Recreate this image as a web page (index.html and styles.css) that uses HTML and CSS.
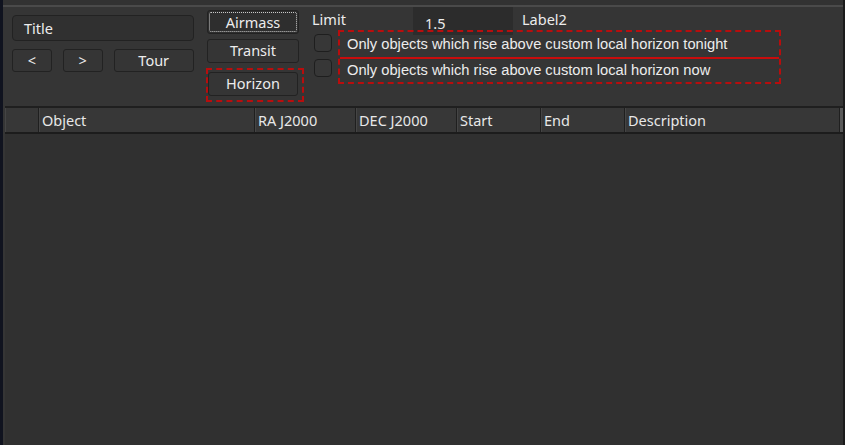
FILE: index.html
```html
<!DOCTYPE html>
<html>
<head>
<meta charset="utf-8">
<link rel="stylesheet" href="styles.css">
</head>
<body>
<div class="window">
  <div class="topline"></div>
  <div class="panel">
    <div class="col1">
      <div class="title-field">Title</div>
      <div class="nav-row">
        <div class="btn btn-sm">&lt;</div>
        <div class="btn btn-sm">&gt;</div>
        <div class="btn btn-tour">Tour</div>
      </div>
    </div>
    <div class="col2">
      <div class="btn btn-wide focus"><span class="focus-ring">Airmass</span></div>
      <div class="btn btn-wide transit">Transit</div>
      <div class="dash-box horizon-box">
        <div class="btn btn-wide horizon">Horizon</div>
      </div>
    </div>
    <div class="col3">
      <div class="limit-row">
        <span class="lbl limit">Limit</span>
        <span class="limit-field">1.5</span>
        <span class="lbl">Label2</span>
      </div>
      <div class="checks">
        <div class="boxes">
          <span class="cb"></span>
          <span class="cb"></span>
        </div>
        <div class="dash-box opts">
          <div class="opt">Only objects which rise above custom local horizon tonight</div>
          <div class="opt opt2">Only objects which rise above custom local horizon now</div>
        </div>
      </div>
    </div>
  </div>
  <div class="table">
    <div class="thead">
      <div class="th c0"></div>
      <div class="th c1">Object</div>
      <div class="th c2">RA J2000</div>
      <div class="th c3">DEC J2000</div>
      <div class="th c4">Start</div>
      <div class="th c5">End</div>
      <div class="th c6">Description</div>
      <div class="th c7"></div>
    </div>
    <div class="tbody"></div>
  </div>
</div>
</body>
</html>
```
FILE: styles.css
```css
html, body {
  margin: 0;
  padding: 0;
  width: 845px;
  height: 445px;
  overflow: hidden;
  background: #333333;
  font-family: "Noto Sans", "Open Sans", sans-serif;
  color: #ececec;
}
.window {
  width: 845px;
  height: 445px;
  box-sizing: border-box;
  border-left: 3px solid #10131f;
  border-right: 2px solid #1b1b1b;
  display: flex;
  flex-direction: column;
  background: #353535;
}
.topline {
  height: 5px;
  border-bottom: 2px solid #4a4a4a;
  background: #323232;
  flex: none;
}
.panel {
  height: 99px;
  display: flex;
  padding-left: 9px;
  box-sizing: border-box;
  flex: none;
}
.col1 {
  width: 182px;
  padding-top: 8px;
}
.title-field {
  height: 26px;
  box-sizing: border-box;
  border: 1px solid #222;
  border-radius: 4px;
  background: #303030;
  font-size: 14.5px;
  line-height: 25px;
  padding-left: 11px;
}
.nav-row {
  display: flex;
  margin-top: 8px;
  gap: 11px;
}
.btn {
  box-sizing: border-box;
  border: 1px solid #222;
  border-radius: 3px;
  background: #353535;
  font-size: 14.5px;
  text-align: center;
  height: 23px;
  line-height: 21px;
}
.btn-sm { width: 40px; }
.btn-tour { width: 81px; }
.col2 {
  width: 98px;
  margin-left: 12px;
  padding-top: 3px;
}
.btn-wide {
  width: 92px;
  height: 24px;
  margin-left: 1px;
}
.focus {
  padding: 1px;
  background: #2e2e2e;
}
.focus-ring {
  display: block;
  border: 1px dotted #c8c8c8;
  border-radius: 2px;
  height: 20px;
  line-height: 19px;
  box-sizing: border-box;
}
.transit {
  margin-top: 5px;
}
.dash-box {
  border: 2px dashed #b80d0d;
  box-sizing: border-box;
}
.horizon-box {
  margin-top: 5px;
  width: 98px;
  height: 34px;
  padding-top: 2px;
}
.horizon {
  width: 90px;
  margin-left: 0;
}
.col3 {
  margin-left: 8px;
  padding-top: 1px;
}
.limit-row {
  display: flex;
  align-items: flex-start;
  font-size: 14.5px;
  height: 22px;
}
.lbl {
  line-height: 22px;
}
.limit {
  width: 101px;
}
.limit-field {
  width: 100px;
  height: 28px;
  margin-top: -1px;
  background: #2c2c2c;
  box-sizing: border-box;
  padding-left: 12px;
  line-height: 32px;
  margin-right: 9px;
  position: relative;
  z-index: 0;
}
.checks {
  display: flex;
}
.boxes {
  display: flex;
  flex-direction: column;
  padding-left: 2px;
  padding-top: 4px;
  gap: 7px;
  width: 24px;
}
.cb {
  width: 18px;
  height: 18px;
  box-sizing: border-box;
  border: 1px solid #1e1e1e;
  border-radius: 4px;
  background: #373737;
}
.opts {
  width: 443px;
  height: 54px;
  font-family: "Liberation Sans", Arial, sans-serif;
  font-size: 14.7px;
  position: relative;
  z-index: 1;
}
.opt {
  height: 25px;
  line-height: 24px;
  padding-left: 7px;
}
.opt2 {
  border-top: 2px solid #c80c0c;
  height: 25px;
  line-height: 23px;
}
.table {
  flex: 1;
  display: flex;
  flex-direction: column;
  margin-left: 2px;
  background: #303030;
}
.thead {
  display: flex;
  height: 28px;
  box-sizing: border-box;
  border-top: 2px solid #1f1f1f;
  border-bottom: 2px solid #1c1c1c;
  flex: none;
}
.th {
  box-sizing: border-box;
  background: #373737;
  border-right: 1px solid #1f1f1f;
  border-left: 1px solid #454545;
  font-size: 14.5px;
  line-height: 25px;
  padding-left: 2px;
  color: #e8e8e8;
}
.c0 { width: 34px; }
.c1 { width: 216px; }
.c2 { width: 101px; }
.c3 { width: 101px; }
.c4 { width: 84px; }
.c5 { width: 84px; }
.c6 { width: 215px; }
.c7 { width: 3px; background: #5a5a5a; border: none; }
.tbody {
  flex: 1;
  background: #303030;
}
```
